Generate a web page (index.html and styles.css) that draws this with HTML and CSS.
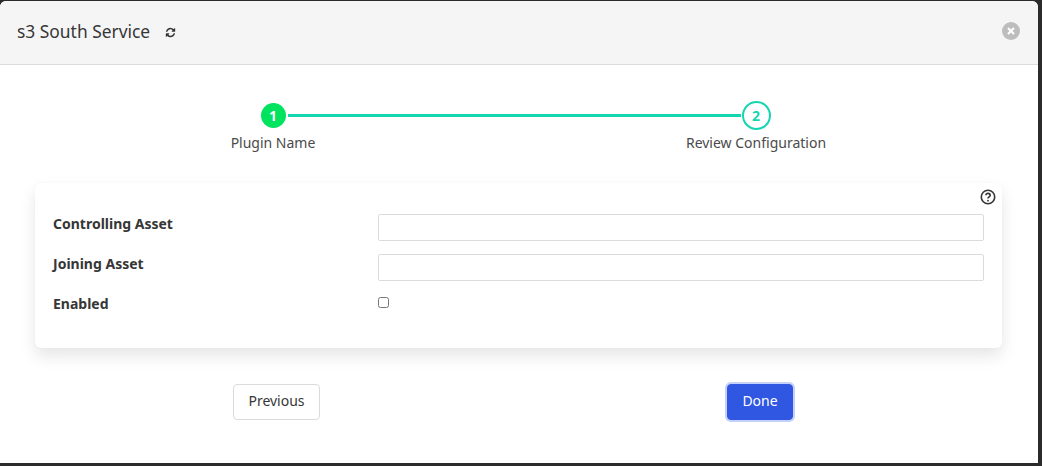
FILE: index.html
```html
<!DOCTYPE html>
<html lang="en">
<head>
<meta charset="utf-8">
<title>s3 South Service</title>
<link rel="stylesheet" href="styles.css">
</head>
<body>
<div class="modal">
  <header class="modal-head">
    <h1 class="modal-title">s3 South Service</h1>
    <svg class="refresh" viewBox="0 0 1792 1792" aria-hidden="true"><path d="M1639 1056q0 5-1 7-64 268-268 434.5t-478 166.5q-146 0-282.5-55t-243.5-157l-129 129q-19 19-45 19t-45-19-19-45v-448q0-26 19-45t45-19h448q26 0 45 19t19 45-19 45l-137 137q71 66 161 102t187 36q134 0 250-65t186-179q11-17 53-117 8-23 30-23h192q13 0 22.5 9.5t9.5 22.5zm25-800v448q0 26-19 45t-45 19h-448q-26 0-45-19t-19-45 19-45l138-138q-148-137-349-137-134 0-250 65t-186 179q-11 17-53 117-8 23-30 23h-199q-13 0-22.5-9.5t-9.5-22.5v-7q65-268 270-434.5t480-166.5q146 0 284 55.5t245 156.5l130-129q19-19 45-19t45 19 19 45z"/></svg>
    <button class="close" aria-label="Close">
      <svg viewBox="0 0 18 18" aria-hidden="true"><path d="M6 6l6 6M12 6l-6 6"/></svg>
    </button>
  </header>
  <div class="modal-body">
    <div class="steps">
      <div class="step">
        <span class="dot dot-done">1</span>
        <span class="step-label">Plugin Name</span>
      </div>
      <div class="step-line"></div>
      <div class="step">
        <span class="dot dot-current">2</span>
        <span class="step-label">Review Configuration</span>
      </div>
    </div>
    <section class="card">
      <svg class="help" viewBox="0 0 14 14" aria-hidden="true">
        <circle cx="7" cy="7" r="5.9"/>
        <path d="M5.1 5.5c0-1.1.9-1.7 1.9-1.7s1.9.6 1.9 1.6c0 1.5-1.9 1.4-1.9 2.9"/>
        <circle class="help-dot" cx="7" cy="10.2" r=".8"/>
      </svg>
      <div class="form-grid">
        <label class="field-label" for="ca">Controlling Asset</label>
        <input class="text-input" id="ca" type="text">
        <label class="field-label" for="ja">Joining Asset</label>
        <input class="text-input" id="ja" type="text">
        <label class="field-label" for="en">Enabled</label>
        <div class="check-cell"><input class="check" id="en" type="checkbox"></div>
      </div>
    </section>
    <footer class="actions">
      <button class="btn btn-light">Previous</button>
      <button class="btn btn-primary">Done</button>
    </footer>
  </div>
</div>
</body>
</html>
```
FILE: styles.css
```css
* { box-sizing: border-box; }
html, body { height: 100%; }
body {
  margin: 0;
  padding-top: 1px;
  background: #2b2b2b;
  overflow: hidden;
  font-family: "Noto Sans", "Open Sans", sans-serif;
  color: #363636;
}
.modal {
  width: 1038px;
  height: 462px;
  background: #fff;
  border-radius: 6px 6px 0 0;
  overflow: hidden;
}
.modal-head {
  height: 64px;
  background: #f5f5f5;
  border-bottom: 1px solid #dbdbdb;
  display: flex;
  align-items: center;
  padding: 0 18px 3px 17px;
}
.modal-title {
  margin: 0;
  font-size: 17.4px;
  font-weight: 400;
  line-height: 24px;
  color: #363636;
}
.refresh { width: 11px; height: 11px; margin-left: 15px; margin-top: 2px; fill: #363636; }
.close {
  margin-left: auto;
  width: 18px;
  height: 18px;
  padding: 0;
  border: 0;
  border-radius: 50%;
  background: #bdbdbd;
  display: block;
}
.close svg { display: block; width: 18px; height: 18px; stroke: #fff; stroke-width: 2.2; fill: none; }
.modal-body { display: flex; flex-direction: column; }
.steps {
  display: flex;
  align-items: flex-start;
  padding: 36px 202px 0 193px;
}
.step {
  width: 160px;
  flex: none;
  display: flex;
  flex-direction: column;
  align-items: center;
  position: relative;
  z-index: 1;
}
.dot {
  border-radius: 50%;
  display: flex;
  align-items: center;
  justify-content: center;
  font-size: 14px;
  font-weight: 700;
  font-family: "Open Sans", sans-serif;
}
.dot-done { width: 25px; height: 25px; margin: 2px 0; background: #00e35f; color: #fff; box-shadow: 0 0 0 2px #fff; }
.dot-current { width: 29px; height: 29px; border: 2px solid #14d6b0; background: #fff; color: #14d6b0; }
.step-label { font-size: 14px; line-height: 20px; margin-top: 3px; color: #4a4a4a; }
.step-line {
  flex: 1;
  height: 3px;
  margin: 13px -65px 0;
  background: #14d6b0;
}
.card {
  position: relative;
  width: 967px;
  height: 165px;
  margin: 30px 0 0 35px;
  border-radius: 6px;
  background: #fff;
  box-shadow: 0 8px 16px rgba(10, 10, 10, .1), 0 0 2px rgba(10, 10, 10, .04);
  padding: 31px 18px 0;
}
.help { position: absolute; top: 6px; right: 6px; width: 16px; height: 16px; fill: none; stroke: #363636; stroke-width: 1.4; }
.help-dot { fill: #363636; stroke: none; }
.form-grid {
  display: grid;
  grid-template-columns: 325px 606px;
  grid-auto-rows: 27px;
  row-gap: 13px;
}
.field-label { font-size: 14px; font-weight: 700; line-height: 20px; color: #363636; }
.text-input {
  width: 100%;
  height: 27px;
  border: 1px solid #dbdbdb;
  border-radius: 2px;
  background: #fff;
  padding: 0 8px;
}
.check-cell { display: flex; align-items: flex-start; padding-top: 3px; }
.check { width: 11px; height: 11px; margin: 0; }
.actions {
  display: flex;
  justify-content: space-between;
  align-items: center;
  padding: 36px 245px 0 233px;
}
.btn {
  height: 36px;
  border-radius: 4px;
  font: 400 14px/20px "Noto Sans", "Open Sans", sans-serif;
  padding: 0 0 2px;
}
.btn-light { width: 87px; background: #fff; border: 1px solid #dbdbdb; color: #363636; }
.btn-primary { width: 66px; background: #3057e1; border: 1px solid #3057e1; color: #fff; box-shadow: 0 0 0 2px #c3d0f7; }
```
